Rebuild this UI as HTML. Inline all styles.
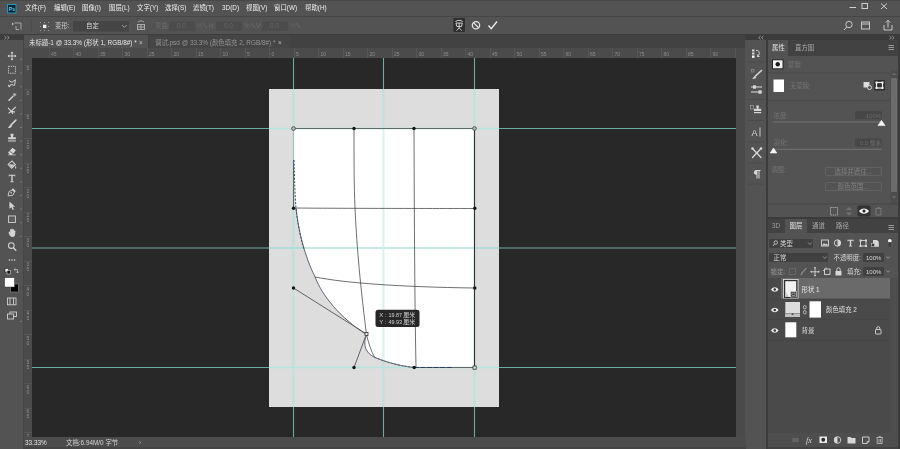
<!DOCTYPE html>
<html lang="zh-CN">
<head>
<meta charset="utf-8">
<title>Photoshop</title>
<style>
*{box-sizing:border-box;margin:0;padding:0}
html,body{width:900px;height:449px;overflow:hidden;background:#535353}
body{position:relative;font-family:"Liberation Sans","Noto Sans CJK SC",sans-serif;font-size:6.4px;color:#d6d6d6;line-height:1}
.abs{position:absolute}
.t{position:absolute;white-space:nowrap;line-height:10px;height:10px}
#menubar{left:0;top:0;width:900px;height:16px;background:#535353;border-top:1px solid #484848}
#optbar{left:0;top:16px;width:900px;height:18px;background:#535353;border-top:1px solid #464646}
#tabbar{left:24px;top:34px;width:722px;height:14px;background:#424242;border-top:1px solid #3d3d3d}
#tab1{left:0;top:0px;width:124px;height:13px;background:#535353}
#tab2{left:125px;top:0px;width:141px;height:13px;background:#454545}
#toolbar{left:0;top:34px;width:24px;height:415px;background:#535353;border-right:1px solid #464646}
#canvas{left:32px;top:58px;width:704px;height:379px;background:#282828;overflow:hidden}
#vscroll{left:736px;top:48px;width:8.5px;height:389px;background:#4a4a4a}
#rulerh{left:24px;top:48px;width:722px;height:10px;background:#4b4b4b}
#rulerv{left:24px;top:57px;width:8px;height:380px;background:#4b4b4b}
#status{left:24px;top:437px;width:722px;height:12px;background:#4c4c4c;border-bottom:2px solid #444}

#rulerh i{position:absolute;top:0;width:1px;height:10px;background:#565656}
#rulerh b{position:absolute;top:3px;margin-left:1px;font-weight:normal;font-size:5px;line-height:6px;color:#8e8e8e}
#rulerv i{position:absolute;left:0;height:1px;width:8px;background:#565656}
#rulerv b{position:absolute;left:2px;font-weight:normal;font-size:5px;line-height:5px;color:#8e8e8e;text-align:center;width:4px}

#menubar .t{top:2.300px;font-size:6.4px;color:#ededed}
#optbar .t{font-size:6.4px}
.dim{color:#7a7a7a}
#rightdock{left:744.5px;top:34px;width:155.5px;height:415px;background:#3b3b3b}
#iconcol{left:0px;top:6px;width:21px;height:409px;background:#535353}
#props{left:23.5px;top:6px;width:129.5px;height:177px;background:#535353}
#layers{left:23.5px;top:185px;width:129.5px;height:230px;background:#535353}
.ptabs{left:0;top:0;width:129.5px;height:16px;background:#424242}
.ptab{position:absolute;top:0;height:16px;background:#535353}
.box{position:absolute;background:#454545;border-radius:1px}
.btn{position:absolute;border:1px solid #626262;border-radius:1px;color:#808080;font-size:6.4px;text-align:center;line-height:7px}
#menubar .t,#optbar,#toolbar,#tabbar,#rulerh,#rulerv,#status,#rightdock,#rdov{filter:grayscale(1)}
</style>
</head>
<body>
<div id="menubar" class="abs"><svg class="abs" style="left:7px;top:3px" width="10" height="10" viewBox="0 0 10 10"><rect x="0.5" y="0.5" width="8.5" height="8.5" fill="#0b2836" stroke="#2b9dc4" stroke-width="0.9"/><text x="1.7" y="7" font-family="'Liberation Sans',sans-serif" font-size="5.2" font-weight="bold" fill="#62c6ea">Ps</text></svg><span class="t" style="left:25px">文件(F)</span><span class="t" style="left:54px">编辑(E)</span><span class="t" style="left:82px">图像(I)</span><span class="t" style="left:109px">图层(L)</span><span class="t" style="left:137px">文字(Y)</span><span class="t" style="left:165px">选择(S)</span><span class="t" style="left:193px">滤镜(T)</span><span class="t" style="left:222px">3D(D)</span><span class="t" style="left:246px">视图(V)</span><span class="t" style="left:274px">窗口(W)</span><span class="t" style="left:305px">帮助(H)</span><svg class="abs" style="left:840px;top:0" width="60" height="15" viewBox="0 0 60 15"><g stroke="#d0d0d0" stroke-width="1" fill="none"><line x1="9.5" y1="6.500" x2="16" y2="6.500"/><rect x="22" y="2.500" width="5.500" height="5"/><path d="M41,2.500 L47,8 M47,2.500 L41,8"/></g></svg></div>
<div id="optbar" class="abs"><svg class="abs" style="left:0;top:-2px" width="900" height="19" viewBox="0 15 900 19"><g stroke="#a8a8a8" stroke-width="1" fill="none"><path d="M14.5,23 L21,23 L21,29.5 M16,26 L16,29.5 L19,29.5"/><path d="M12,22.5 l2,1.5 l-2,1.5z" fill="#bdbdbd" stroke="none"/></g><line x1="31.5" y1="19" x2="31.5" y2="32" stroke="#4c4c4c"/><g fill="#9a9a9a"><rect x="40" y="22" width="1" height="1"/><rect x="44" y="22" width="1" height="1"/><rect x="48" y="22" width="1" height="1"/><rect x="40" y="26" width="1" height="1"/><rect x="48" y="26" width="1" height="1"/><rect x="40" y="30" width="1" height="1"/><rect x="44" y="30" width="1" height="1"/><rect x="48" y="30" width="1" height="1"/></g><rect x="43" y="24.7" width="3.4" height="3.4" fill="#f0f0f0"/><rect x="73" y="21" width="56" height="10.5" rx="1" fill="#454545"/><path d="M122,25 l2.3,2.5 l2.3,-2.5" stroke="#9a9a9a" stroke-width="1" fill="none"/><g stroke="#b5b5b5" stroke-width="0.9" fill="none"><rect x="137.5" y="24.5" width="7" height="5"/><line x1="141" y1="24.5" x2="141" y2="29.5"/><line x1="137.5" y1="27" x2="144.5" y2="27"/><path d="M138,22 C140,20.5 142,20.5 144,22"/></g><g fill="#4c4c4c"><rect x="169" y="21.5" width="26" height="9.5" rx="1"/><rect x="216" y="21.5" width="26" height="9.5" rx="1"/><rect x="262" y="21.5" width="26" height="9.5" rx="1"/></g><g stroke="#6a6a6a" stroke-width="0.9" fill="none"><path d="M203,23 l4,5 M251,23 l4,5 M296,23 l4,5"/></g><rect x="453.300" y="18" width="11.700" height="14" rx="0.800" fill="#2f2f2f"/><g stroke="#e0e0e0" stroke-width="0.9" fill="none"><path d="M455.500,21.500 C457.500,20 460.800,20 462.800,21.500"/><path d="M456,23 L462.300,23 L461.500,26.500 L456.800,26.500z M459.150,23 L459.150,26.500"/><path d="M459.150,26.500 l0,1.500 M456.500,30.500 l2.650,-2.500 l2.650,2.500"/></g><circle cx="476" cy="25.200" r="3.700" stroke="#e6e6e6" stroke-width="1.250" fill="none"/><line x1="473.400" y1="22.600" x2="478.600" y2="27.800" stroke="#e6e6e6" stroke-width="1.250"/><path d="M488.500,25.500 L491.200,28.600 L497,21.500" stroke="#ececec" stroke-width="1.400" fill="none"/><g stroke="#c8c8c8" stroke-width="1" fill="none"><circle cx="849" cy="24.500" r="3.200"/><line x1="846.700" y1="27" x2="844" y2="30"/><rect x="861.500" y="22" width="8" height="7"/><line x1="861.500" y1="24" x2="869.500" y2="24"/><path d="M884,25 L884,30 L892,30 L892,25 M888,27.500 L888,20.500 M885.800,22.500 L888,20.300 L890.200,22.500"/></g></svg><span class="t" style="left:55px;top:4.300px;color:#d0d0d0">变形:</span><span class="t" style="left:86px;top:4.300px;color:#d8d8d8">自定</span><span class="t dim" style="left:155px;top:4.300px;color:#6e6e6e">弯曲:</span><span class="t dim" style="left:177px;top:4.300px;color:#666">0.0</span><span class="t" style="left:197px;top:4.300px;color:#666">%</span><span class="t dim" style="left:209px;top:4.300px;color:#6e6e6e">H:</span><span class="t" style="left:224px;top:4.300px;color:#666">0.0</span><span class="t" style="left:244px;top:4.300px;color:#666">%</span><span class="t dim" style="left:256px;top:4.300px;color:#6e6e6e">V:</span><span class="t" style="left:270px;top:4.300px;color:#666">0.0</span><span class="t" style="left:290px;top:4.300px;color:#666">%</span></div>
<div id="toolbar" class="abs"><svg class="abs" style="left:0;top:0" width="24" height="415" viewBox="0 34 24 415">
<rect x="0" y="34" width="24" height="6" fill="#3d3d3d"/>
<path d="M4.500,36 l1.800,1.700 l-1.800,1.700 M7.300,36 l1.800,1.700 l-1.800,1.700" stroke="#a8a8a8" stroke-width="0.800" fill="none"/>
<rect x="5" y="268.500" width="3.500" height="3.500" fill="#f4f4f4" stroke="#222" stroke-width="0.600"/><rect x="7" y="270.500" width="3.500" height="3.500" fill="#111" stroke="#ddd" stroke-width="0.600"/>
<path d="M14,269.500 h3.500 v3.500 M14,269.500 l1.300,-1.200 M14,269.500 l1.300,1.200 M17.500,273 l-1.200,-1.300 M17.500,273 l1.200,-1.300" stroke="#c8c8c8" stroke-width="0.700" fill="none"/>
<rect x="10.500" y="284" width="8" height="8" fill="#000" stroke="#777" stroke-width="0.800"/>
<rect x="4.700" y="277.700" width="9.800" height="9.300" fill="#fff" stroke="#3a3a3a" stroke-width="0.500"/>
<g stroke="#cfcfcf" stroke-width="0.900" fill="none"><rect x="7.500" y="298" width="8.500" height="6.800"/><path d="M10,298 v6.800 M13.500,298 v6.800"/>
<rect x="10" y="312" width="6.500" height="4.500"/><rect x="7.500" y="314" width="6" height="5" fill="#535353"/></g>
<g fill="#9a9a9a"><path d="M20,60 l1.500,0 l0,-1.500z M20,73.600 l1.500,0 l0,-1.500z M20,87.200 l1.500,0 l0,-1.500z M20,100.800 l1.500,0 l0,-1.500z M20,114.400 l1.500,0 l0,-1.500z M20,128 l1.500,0 l0,-1.500z M20,141.600 l1.500,0 l0,-1.500z M20,155.200 l1.500,0 l0,-1.500z M20,168.800 l1.500,0 l0,-1.500z M20,182.400 l1.500,0 l0,-1.500z M20,196 l1.500,0 l0,-1.500z M20,209.600 l1.500,0 l0,-1.500z M20,223.200 l1.500,0 l0,-1.500z M20,236.800 l1.500,0 l0,-1.500z M20,322 l1.500,0 l0,-1.500z"/></g>
<g transform="translate(12,56.0) scale(0.86)"><path d="M0,-4.5 L0,4.5 M-4.5,0 L4.5,0" stroke="#d4d4d4" stroke-width="1.1"/><path d="M0,-5.2 l-1.800,2 h3.600z M0,5.200 l-1.800,-2 h3.600z M-5.200,0 l2,-1.800 v3.600z M5.200,0 l-2,-1.800 v3.600z" fill="#d4d4d4"/></g><g transform="translate(12,69.6) scale(0.86)"><rect x="-4" y="-3.800" width="8" height="8" fill="none" stroke="#d4d4d4" stroke-width="1" stroke-dasharray="1.600 1"/></g><g transform="translate(12,83.2) scale(0.86)"><path d="M-3.500,-3 L0,-1 L4,-4 L3,2.500 L-1.500,1.500 L-3,4.500 M-3,4.500 L-4,2 Z" fill="none" stroke="#d4d4d4" stroke-width="1.100" stroke-linejoin="round"/></g><g transform="translate(12,96.8) scale(0.86)"><path d="M-4,4.500 L1.500,-1" stroke="#d4d4d4" stroke-width="1.600"/><path d="M3,-4.500 L3,-0.500 M1,-2.500 L5,-2.500 M1.600,-3.900 L4.400,-1.100 M4.400,-3.900 L1.600,-1.100" stroke="#d4d4d4" stroke-width="0.700"/></g><g transform="translate(12,110.4) scale(0.86)"><path d="M-4.500,-3 L-1,1 L4.500,-4 M-4,3.500 L-1,1 L1,4 M-1,1 L3.500,2" stroke="#d4d4d4" stroke-width="1.300" fill="none"/></g><g transform="translate(12,124.0) scale(0.86)"><path d="M4.500,-4.500 L-1,1" stroke="#d4d4d4" stroke-width="1.800" stroke-linecap="round"/><path d="M-1.500,1 C-3,1.500 -3,3.500 -5,4.500 C-3,5 -0.500,4 0,2.200Z" fill="#d4d4d4"/></g><g transform="translate(12,137.6) scale(0.86)"><path d="M-1.700,-4.500 h3.400 v1.500 l-0.700,2.500 h3.500 v2.500 h-9 v-2.500 h3.500 l-0.700,-2.500z" fill="#d4d4d4"/><rect x="-4.500" y="3.300" width="9" height="1.200" fill="#d4d4d4"/></g><g transform="translate(12,151.2) scale(0.86)"><path d="M-4.500,1.500 L0.500,-4 L4.500,-1 L0,4.500 L-2.500,4.500 Z" fill="#d4d4d4"/><path d="M-4.500,4.300 L4.500,4.300" stroke="#d4d4d4" stroke-width="0.800"/><path d="M-2.800,0 L1.500,3" stroke="#535353" stroke-width="0.800"/></g><g transform="translate(12,164.8) scale(0.86)"><path d="M-4.500,-0.500 L0,-4.500 L4,0 L-0.500,4 Z" fill="none" stroke="#d4d4d4" stroke-width="1.200"/><path d="M-3.500,-0.500 L3,0 L-0.500,3z" fill="#d4d4d4"/><path d="M4.300,1.500 C5.300,3 5.300,4.500 4.300,4.500 C3.300,4.500 3.300,3 4.300,1.500z" fill="#d4d4d4"/></g><g transform="translate(12,178.4) scale(0.86)"><path d="M-3.800,-4.300 H3.800 V-2.300 H3 V-3.100 H0.800 V3.600 H2 V4.400 H-2 V3.600 H-0.800 V-3.100 H-3 V-2.300 H-3.800Z" fill="#d4d4d4"/></g><g transform="translate(12,192.0) scale(0.86)"><path d="M-4.500,4.500 L-3.500,-0.500 L0.500,-2.500 L2.800,0 L1,3.800 Z" fill="none" stroke="#d4d4d4" stroke-width="1"/><path d="M1,-4.500 L4.500,-1 L3,0.300 L-0.300,-3 Z" fill="#d4d4d4"/><circle cx="-1" cy="1" r="0.900" fill="#d4d4d4"/></g><g transform="translate(12,205.6) scale(0.86)"><path d="M-3,-4.800 L-3,3.800 L-0.800,1.800 L0.800,5 L2.200,4.300 L0.700,1.200 L3.600,1.200 Z" fill="#d4d4d4"/></g><g transform="translate(12,219.2) scale(0.86)"><rect x="-4" y="-3.800" width="8" height="7.600" fill="#5e5e5e" stroke="#d4d4d4" stroke-width="1"/></g><g transform="translate(12,232.8) scale(0.86)"><path d="M-3.800,0.500 C-4.200,-1.500 -2.600,-2 -2.200,-0.500 L-2.200,-3.500 C-2.200,-4.600 -0.900,-4.600 -0.900,-3.500 L-0.700,-4.200 C-0.500,-5.200 0.800,-5 0.800,-4 L1,-3.600 C1.300,-4.500 2.500,-4.300 2.500,-3.300 L2.600,-2.300 C3,-3 4.100,-2.800 4,-1.800 L3.600,2 C3.400,4 2.500,4.800 0.500,4.800 C-1.500,4.800 -2.800,3.500 -3.800,0.500Z" fill="#d4d4d4"/></g><g transform="translate(12,246.4) scale(0.86)"><circle cx="-0.800" cy="-1" r="3.300" fill="none" stroke="#d4d4d4" stroke-width="1.200"/><path d="M1.600,1.500 L4.500,4.500" stroke="#d4d4d4" stroke-width="1.500" stroke-linecap="round"/></g><g transform="translate(12,260.0) scale(0.86)"><circle cx="-3" cy="0" r="0.950" fill="#d4d4d4"/><circle cx="0" cy="0" r="0.950" fill="#d4d4d4"/><circle cx="3" cy="0" r="0.950" fill="#d4d4d4"/></g></svg></div>
<div id="tabbar" class="abs"><div id="tab1" class="abs"><span class="t" style="left:5px;top:2.800px;font-size:6.4px;color:#e4e4e4">未标题-1 @ 33.3% (形状 1, RGB/8#) *</span><span class="t" style="left:115px;top:2.800px;font-size:6.4px;color:#c8c8c8">×</span></div><div id="tab2" class="abs"><span class="t" style="left:6px;top:2.800px;font-size:6.4px;color:#959595">调试.psd @ 33.3% (颜色填充 2, RGB/8#) *</span><span class="t" style="left:129px;top:2.800px;font-size:6.4px;color:#bdbdbd">×</span></div></div>
<div id="rulerh" class="abs"><i style="left:24.5px"></i><b style="left:26.0px">45</b><i style="left:49.0px"></i><b style="left:50.5px">40</b><i style="left:73.5px"></i><b style="left:75.0px">35</b><i style="left:98.0px"></i><b style="left:99.5px">30</b><i style="left:122.5px"></i><b style="left:124.0px">25</b><i style="left:147.0px"></i><b style="left:148.5px">20</b><i style="left:171.5px"></i><b style="left:173.0px">15</b><i style="left:196.0px"></i><b style="left:197.5px">10</b><i style="left:220.5px"></i><b style="left:222.0px">5</b><i style="left:245.0px"></i><b style="left:246.5px">0</b><i style="left:269.5px"></i><b style="left:271.0px">5</b><i style="left:294.0px"></i><b style="left:295.5px">10</b><i style="left:318.5px"></i><b style="left:320.0px">15</b><i style="left:343.0px"></i><b style="left:344.5px">20</b><i style="left:367.5px"></i><b style="left:369.0px">25</b><i style="left:392.0px"></i><b style="left:393.5px">30</b><i style="left:416.5px"></i><b style="left:418.0px">35</b><i style="left:441.0px"></i><b style="left:442.5px">40</b><i style="left:465.5px"></i><b style="left:467.0px">45</b><i style="left:490.0px"></i><b style="left:491.5px">50</b><i style="left:514.5px"></i><b style="left:516.0px">55</b><i style="left:539.0px"></i><b style="left:540.5px">60</b><i style="left:563.5px"></i><b style="left:565.0px">65</b><i style="left:588.0px"></i><b style="left:589.5px">70</b><i style="left:612.5px"></i><b style="left:614.0px">75</b><i style="left:637.0px"></i><b style="left:638.5px">80</b><i style="left:661.5px"></i><b style="left:663.0px">85</b><i style="left:686.0px"></i><b style="left:687.5px">90</b><i style="left:710.5px"></i><b style="left:712.0px">95</b></div>
<div id="rulerv" class="abs"><i style="top:7.5px"></i><b style="top:9.0px">5</b><i style="top:32.0px"></i><b style="top:33.5px">0</b><i style="top:56.5px"></i><b style="top:58.0px">5</b><i style="top:81.0px"></i><b style="top:82.5px">1<br>0</b><i style="top:105.5px"></i><b style="top:107.0px">1<br>5</b><i style="top:130.0px"></i><b style="top:131.5px">2<br>0</b><i style="top:154.5px"></i><b style="top:156.0px">2<br>5</b><i style="top:179.0px"></i><b style="top:180.5px">3<br>0</b><i style="top:203.5px"></i><b style="top:205.0px">3<br>5</b><i style="top:228.0px"></i><b style="top:229.5px">4<br>0</b><i style="top:252.5px"></i><b style="top:254.0px">4<br>5</b><i style="top:277.0px"></i><b style="top:278.5px">5<br>0</b><i style="top:301.5px"></i><b style="top:303.0px">5<br>5</b><i style="top:326.0px"></i><b style="top:327.5px">6<br>0</b><i style="top:350.5px"></i><b style="top:352.0px">6<br>5</b><i style="top:375.0px"></i><b style="top:376.5px">7<br>0</b></div>
<div id="canvas" class="abs">
<svg class="abs" style="left:-32px;top:-58px" width="900" height="449" viewBox="0 0 900 449">
<rect x="269" y="89" width="230" height="318" fill="#dddddd"/>
<path id="shape" d="M294,129 L474.5,129 L474.5,367.5 L414,367.5 C396,365.5 382,360.5 374.7,357.3 C365.5,353 362.5,345 366.5,334.5 C340,318 322,295 315.5,278 C304,255 298,228 296,208 C295,195 294.500,180 294,160 Z" fill="#ffffff"/>
<!-- guides -->
<g stroke="#68ab9f" stroke-width="1.1">
<line x1="293.5" y1="57" x2="293.5" y2="437"/>
<line x1="383.5" y1="57" x2="383.5" y2="437"/>
<line x1="474.5" y1="57" x2="474.5" y2="437"/>
<line x1="32" y1="128.5" x2="746" y2="128.5"/>
<line x1="32" y1="248" x2="746" y2="248"/>
<line x1="32" y1="367.5" x2="746" y2="367.5"/>
</g>
<g stroke="#b3e6dc" stroke-width="1.3">
<line x1="293.5" y1="89" x2="293.5" y2="407"/>
<line x1="383.5" y1="89" x2="383.5" y2="407"/>
<line x1="474.5" y1="89" x2="474.5" y2="407"/>
<line x1="269" y1="128.5" x2="499" y2="128.5"/>
<line x1="269" y1="248" x2="499" y2="248"/>
<line x1="269" y1="367.5" x2="499" y2="367.5"/>
</g>
<g stroke="#d2f5f0" stroke-width="1.1">
<line x1="383.5" y1="129.5" x2="383.5" y2="360"/>
<line x1="304" y1="248" x2="474" y2="248"/>
</g>
<!-- mesh -->
<g stroke="#4a4a4a" stroke-width="0.8" fill="none">
<path d="M293.5,128.5 L474.5,128.5"/>
<path d="M474.5,128.5 L474.5,367.5" stroke="#333" stroke-width="1.1"/>
<path d="M354,128.5 C354,160 354,185 355,208 C356.5,240 359,275 366.5,334.5 C368.5,343 371,351 374.7,357.3"/>
<path d="M414,128.5 C414.3,200 414.5,290 416,367.5"/>
<path d="M293.5,208 C320,208.3 400,208.5 474.5,208.5"/>
<path d="M315,277 C345,283 400,287 474.5,288"/>
<path d="M293.5,160 L293.5,208 M296,208 C298,228 304,255 315.5,278 C322,295 340,318 366.5,334.5 C362.5,345 365.5,353 374.7,357.3 C382,360.5 396,365.5 414,367.5 L474.5,367.5"/>
</g>
<path d="M293.5,128.5 L293.5,160" stroke="#a9b5b3" stroke-width="0.8"/>
<!-- handles -->
<g stroke="#444" stroke-width="0.8" fill="none">
<line x1="293.5" y1="288" x2="366.5" y2="334"/>
<line x1="366.5" y1="334" x2="354" y2="367.5"/>
</g>
<g fill="none" stroke-dasharray="2 1.5">
<path d="M294,160 C294.5,180 295,195 296,208 C297.500,222 300,236 304,250" stroke="#33507f" stroke-width="1"/>
<path d="M304,250 C307,260 311,269 315.5,278 C322,295 340,318 366.5,334.5 C362.5,345 365.5,353 374.7,357.3" stroke="#6f86ad" stroke-width="0.7" opacity="0.7"/>
<path d="M374.7,357.3 C382,360.5 396,365.5 414,367.5" stroke="#4a5f85" stroke-width="0.9"/>
<path d="M414,367.5 L452,367.5" stroke="#2c3f63" stroke-width="1.1" stroke-dasharray="5 1.5"/>
</g>
<g fill="#151515">
<circle cx="354" cy="128.5" r="1.7"/><circle cx="414" cy="128.5" r="1.7"/>
<circle cx="293.5" cy="208.3" r="1.7"/><circle cx="474.8" cy="208.3" r="1.7"/>
<circle cx="293.5" cy="288" r="1.7"/><circle cx="474.8" cy="288" r="1.7"/>
<circle cx="354" cy="367.5" r="1.7"/><circle cx="414.2" cy="367.5" r="1.7"/>
</g>
<g fill="#e8e8e8" stroke="#333" stroke-width="0.8">
<circle cx="293.5" cy="128.5" r="1.9" fill="#b5b5b5" stroke="#444"/><circle cx="474.5" cy="128.5" r="1.900" fill="#b5b5b5" stroke="#444"/>
<rect x="473" y="366" width="3.2" height="3.2"/>
<rect x="365" y="332.5" width="3" height="3"/>
</g>
</svg>
<svg class="abs" style="left:343px;top:250px;filter:grayscale(1)" width="50" height="20" viewBox="375 308 50 20">
<rect x="375.5" y="309.8" width="44" height="17.2" rx="2.5" fill="#272727"/>
<g font-family="'Liberation Sans','Noto Sans CJK SC',sans-serif" font-size="6" fill="#d4d4d4">
<text x="379.3" y="317">X :</text><text x="388.4" y="317" font-size="5.400">19.87</text><text x="403.300" y="317">厘米</text>
<text x="379.3" y="324">Y :</text><text x="388.4" y="324" font-size="5.400">49.93</text><text x="403.300" y="324">厘米</text>
</g>
</svg>
</div>
<div id="vscroll" class="abs"></div><div id="rightdock" class="abs"><div id="iconcol" class="abs"></div><div id="props" class="abs"><div class="ptabs abs"><div class="ptab" style="left:0;width:20px"></div></div></div><div id="layers" class="abs"><div class="ptabs abs" style="height:14px"><div class="ptab" style="left:17px;width:22px;height:14px"></div></div><div class="abs" style="left:0;top:59px;width:129.500px;height:171px;background:#4e4e4e"></div><div class="abs" style="left:0;top:228px;width:129.500px;height:2px;background:#424242"></div><div class="abs" style="left:0;top:59px;width:122px;height:155px;background:#4a4a4a"></div><div class="abs" style="left:13px;top:59px;width:109px;height:21px;background:#6a6a6a"></div></div></div><div id="rdov" class="abs" style="left:0;top:0;width:900px;height:449px;pointer-events:none"><svg class="abs" style="left:0;top:0" width="900" height="449" viewBox="0 0 900 449"><g stroke="#a8a8a8" stroke-width="0.800" fill="none"><path d="M760.500,36 l-1.800,1.700 l1.800,1.700 M763.300,36 l-1.800,1.700 l1.800,1.700"/><path d="M889.500,36 l1.800,1.700 l-1.800,1.700 M892.300,36 l1.800,1.700 l-1.800,1.700"/></g><line x1="748" y1="62" x2="764" y2="62" stroke="#4a4a4a" stroke-width="1"/><line x1="748" y1="99.5" x2="764" y2="99.5" stroke="#4a4a4a" stroke-width="1"/><line x1="748" y1="120.5" x2="764" y2="120.5" stroke="#4a4a4a" stroke-width="1"/><line x1="748" y1="142" x2="764" y2="142" stroke="#4a4a4a" stroke-width="1"/><line x1="748" y1="163" x2="764" y2="163" stroke="#4a4a4a" stroke-width="1"/><line x1="748" y1="184" x2="764" y2="184" stroke="#4a4a4a" stroke-width="1"/><g fill="#d6d6d6"><rect x="752" y="49.500" width="2.500" height="2"/><rect x="752" y="52.500" width="2.500" height="2"/><rect x="752" y="55.500" width="2.500" height="2.300" fill="#fff"/></g><path d="M756,50.500 C759.500,50 760.500,54 757.500,56.500 M757.500,56.500 l0.200,-2 M757.500,56.500 l2,0" stroke="#d6d6d6" stroke-width="1" fill="none"/><path d="M761.500,70.500 L755.500,76" stroke="#d6d6d6" stroke-width="1.600" stroke-linecap="round"/><path d="M755,76 C753.500,76.500 753.800,78 752,78.800 C754,79.300 756,78.500 756.300,77Z" fill="#d6d6d6"/><rect x="751.500" y="69.500" width="2.500" height="2.500" fill="none" stroke="#999" stroke-width="0.600"/><g stroke="#d6d6d6" stroke-width="1.100"><line x1="751" y1="87" x2="762" y2="87"/><line x1="751" y1="92" x2="762" y2="92"/></g><rect x="753" y="85.300" width="3" height="3.400" fill="#d6d6d6"/><rect x="758.500" y="90.300" width="3" height="3.400" fill="#d6d6d6"/><path d="M756.300,105.500 h2.600 v1.200 l-0.500,2 h2.800 v2.200 h-7.200 v-2.200 h2.800 l-0.500,-2z" fill="#d6d6d6"/><rect x="754" y="112" width="7.200" height="1.200" fill="#d6d6d6"/><rect x="750.500" y="105.500" width="3" height="3.500" fill="none" stroke="#aaa" stroke-width="0.600"/><text x="751.500" y="135.500" font-family="'Liberation Sans',sans-serif" font-size="9" fill="#d6d6d6">A</text><line x1="760" y1="127.500" x2="760" y2="136.500" stroke="#d6d6d6" stroke-width="0.900"/><g stroke="#d6d6d6" stroke-width="1.300" stroke-linecap="round"><line x1="752.500" y1="148.500" x2="761" y2="157.500"/><line x1="761" y1="148.500" x2="752.500" y2="157.500"/></g><circle cx="752.500" cy="148.500" r="1.300" fill="#d6d6d6"/><circle cx="761" cy="148.500" r="1.300" fill="#d6d6d6"/><path d="M756.500,170 h4 v1 h-1 v7.500 h-1 v-7.500 h-1 v7.500 h-1 v-3.800 C753,174.800 753,170 756.500,170z" fill="#d6d6d6"/></svg><svg class="abs" style="left:0;top:0" width="900" height="449" viewBox="0 0 900 449"><g stroke="#b0b0b0" stroke-width="0.800"><path d="M888.500,45.500 h5.500 M888.500,47.500 h5.500 M888.500,49.500 h5.500"/><path d="M888.500,225.500 h5.500 M888.500,227.500 h5.500 M888.500,229.500 h5.500"/></g><rect x="772.500" y="59.800" width="10.500" height="9" fill="#f2f2f2" stroke="#262626" stroke-width="1"/><circle cx="777.750" cy="64.300" r="2.200" fill="#1c1c1c"/><line x1="768" y1="73" x2="890" y2="73" stroke="#484848"/><rect x="773.500" y="79.500" width="10.500" height="12.500" fill="#ffffff"/><g stroke="#d6d6d6" stroke-width="1" fill="none"><rect x="864" y="82.500" width="5" height="4.500" fill="#e0e0e0"/><circle cx="869.500" cy="87.500" r="2" fill="#535353"/></g><rect x="874" y="80" width="11" height="10.500" rx="1" fill="#2e2e2e"/><rect x="876.500" y="82.500" width="6" height="5.500" fill="none" stroke="#f0f0f0" stroke-width="1.200"/><g fill="#f0f0f0"><rect x="875.500" y="81.500" width="2" height="2"/><rect x="881.500" y="81.500" width="2" height="2"/><rect x="875.500" y="87" width="2" height="2"/><rect x="881.500" y="87" width="2" height="2"/></g><line x1="768" y1="100.500" x2="890" y2="100.500" stroke="#494949"/><rect x="855" y="111.300" width="27" height="8" rx="1" fill="#474747"/><line x1="773" y1="122" x2="882" y2="122" stroke="#686868" stroke-width="1.300"/><path d="M881.500,120.300 l3.600,5.300 h-7.200z" fill="#f4f4f4" stroke="#f4f4f4" stroke-width="0.600" stroke-linejoin="round"/><rect x="855" y="138.500" width="27" height="8" rx="1" fill="#474747"/><line x1="773" y1="149.300" x2="882" y2="149.300" stroke="#6c6c6c" stroke-width="1.300"/><path d="M773.500,148 l3.300,5 h-6.600z" fill="#f4f4f4" stroke="#f4f4f4" stroke-width="0.600" stroke-linejoin="round"/><rect x="890.500" y="70" width="7" height="134" fill="#4d4d4d"/><rect x="891" y="78" width="6" height="114" rx="1" fill="#6b6b6b"/><path d="M892.500,75 l1.500,-1.800 l1.500,1.800 M892.500,196 l1.500,1.800 l1.500,-1.800" stroke="#8a8a8a" stroke-width="0.700" fill="none"/><line x1="768" y1="204" x2="898" y2="204" stroke="#474747"/><rect x="830.500" y="207.500" width="7" height="7.500" fill="none" stroke="#b8b8b8" stroke-width="0.900" stroke-dasharray="1.200 0.800"/><path d="M849,207 l3.500,3 h-7z M849,215.500 l3.500,-3 h-7z" fill="#707070"/><rect x="857.500" y="205.500" width="13" height="11" rx="1.500" fill="#333"/><path d="M859,211 C861,207.500 867,207.500 869,211 C867,214.500 861,214.500 859,211z" fill="#f2f2f2"/><circle cx="864" cy="211" r="1.500" fill="#222"/><path d="M875.500,208.500 h6 M876,208.500 v6.500 h5 v-6.500 M877.500,207.500 h2" stroke="#7a7a7a" stroke-width="0.900" fill="none"/><rect x="769" y="239" width="44" height="9" rx="1" fill="#404040"/><circle cx="775.800" cy="242.500" r="1.700" fill="none" stroke="#d6d6d6" stroke-width="0.800"/><line x1="774.500" y1="244" x2="773" y2="246" stroke="#d6d6d6" stroke-width="0.800"/><path d="M808,242.500 l1.800,2 l1.800,-2" stroke="#a0a0a0" stroke-width="0.800" fill="none"/><rect x="821.500" y="240" width="7" height="6" fill="none" stroke="#d6d6d6" stroke-width="0.900"/><path d="M822,245.500 l2,-2.500 l1.500,1.500 l1.200,-1 l1.500,2z" fill="#d6d6d6"/><circle cx="837.500" cy="243" r="3.200" fill="none" stroke="#d6d6d6" stroke-width="0.900"/><path d="M837.500,239.800 a3.200,3.200 0 0 1 0,6.400z" fill="#d6d6d6"/><path d="M847.500,239.800 h6 v1.600 h-0.700 v-0.700 h-1.600 v5 h0.900 v0.800 h-3.200 v-0.800 h0.900 v-5 h-1.600 v0.700 h-0.700z" fill="#d6d6d6"/><rect x="860.500" y="240.500" width="5.500" height="5.500" fill="none" stroke="#d6d6d6" stroke-width="0.900"/><g fill="#d6d6d6"><rect x="859.500" y="239.500" width="2" height="2"/><rect x="865" y="239.500" width="2" height="2"/><rect x="859.500" y="245" width="2" height="2"/><rect x="865" y="245" width="2" height="2"/></g><path d="M873,240 h4 l1.800,1.800 v5 h-5.800z" fill="#d6d6d6"/><rect x="871.500" y="243.500" width="3" height="3" fill="#333" stroke="#d6d6d6" stroke-width="0.500"/><circle cx="889.800" cy="240.800" r="1.900" fill="#efefef"/><rect x="888.500" y="242" width="2.600" height="5" rx="1.300" fill="#3e3e3e"/><rect x="769" y="253" width="59" height="9" rx="1" fill="#404040"/><path d="M823,256.500 l1.800,2 l1.800,-2" stroke="#a0a0a0" stroke-width="0.800" fill="none"/><rect x="863" y="253" width="21" height="9" rx="1" fill="#404040"/><path d="M886.500,256.500 l1.600,1.800 l1.600,-1.800" stroke="#a0a0a0" stroke-width="0.800" fill="none"/><rect x="863" y="267" width="21" height="9" rx="1" fill="#404040"/><path d="M886.500,270.500 l1.600,1.800 l1.600,-1.800" stroke="#a0a0a0" stroke-width="0.800" fill="none"/><rect x="789.500" y="268.500" width="6" height="6" fill="none" stroke="#8a8a8a" stroke-width="0.700" stroke-dasharray="1 1"/><path d="M806,268.500 L801.500,273.500" stroke="#8a8a8a" stroke-width="1.200" stroke-linecap="round"/><path d="M801.500,273.500 l-1.500,2 l2.300,-0.800z" fill="#8a8a8a"/><path d="M815,267.500 v8.500 M810.800,271.800 h8.400" stroke="#d6d6d6" stroke-width="0.900"/><path d="M815,266.800 l-1.300,1.500 h2.600z M815,276.600 l-1.300,-1.500 h2.600z M810.200,271.800 l1.500,-1.300 v2.600z M819.800,271.800 l-1.500,-1.300 v2.600z" fill="#d6d6d6"/><rect x="824.500" y="269" width="5.500" height="5.500" fill="none" stroke="#d6d6d6" stroke-width="0.900"/><path d="M823,270.500 h2 M826,267.500 v2 " stroke="#d6d6d6" stroke-width="0.800"/><rect x="835.500" y="271" width="6" height="4.500" fill="#d6d6d6"/><path d="M836.800,271 v-1.500 a1.700,1.700 0 0 1 3.400,0 v1.500" stroke="#d6d6d6" stroke-width="0.900" fill="none"/><path d="M771,289.5 C773,286.5 776.500,286.5 778.500,289.5 C776.500,292.5 773,292.5 771,289.5z" fill="#ededed"/><circle cx="774.750" cy="289.5" r="1.250" fill="#333"/><path d="M771,310 C773,307 776.500,307 778.500,310 C776.500,313 773,313 771,310z" fill="#ededed"/><circle cx="774.750" cy="310" r="1.250" fill="#333"/><path d="M771,330.5 C773,327.5 776.500,327.5 778.500,330.5 C776.500,333.5 773,333.5 771,330.5z" fill="#ededed"/><circle cx="774.750" cy="330.5" r="1.250" fill="#333"/><rect x="783.500" y="279.500" width="14.500" height="19" fill="#2e2e2e" stroke="#e8e8e8" stroke-width="0.800"/><rect x="785.200" y="281.200" width="11" height="15.800" fill="#f1f1f1"/><path d="M785.200,288 c0.500,4 2,7.500 4,9 h-4z" fill="#c4c4c4"/><rect x="790.500" y="291.500" width="6" height="5.500" fill="#3a3a3a" stroke="#ddd" stroke-width="0.600"/><rect x="792" y="293" width="3" height="2.500" fill="none" stroke="#ddd" stroke-width="0.500"/><rect x="785.300" y="302" width="14.700" height="15" fill="#dcdcdc"/><rect x="785.300" y="313.300" width="14.700" height="1" fill="#777"/><rect x="785.300" y="314.300" width="14.700" height="2.700" fill="#c0c0c0"/><path d="M792.500,313 l1.300,1.800 h-2.600z" fill="#333"/><path d="M804.800,305.500 a1.300,1.600 0 0 1 0,3.500 M804.800,305.500 a1.300,1.600 0 0 0 0,3.500 M804.800,310.500 a1.300,1.600 0 0 1 0,3.500 M804.800,310.500 a1.300,1.600 0 0 0 0,3.500" stroke="#cfcfcf" stroke-width="0.800" fill="none"/><rect x="809.500" y="301.300" width="11.500" height="16.300" fill="#ffffff"/><rect x="785.300" y="322.300" width="11" height="15" fill="#ffffff"/><rect x="875.500" y="329.500" width="5.500" height="4.500" rx="0.500" fill="none" stroke="#d6d6d6" stroke-width="0.900"/><path d="M876.700,329.500 v-1.300 a1.550,1.550 0 0 1 3.100,0 v1.300" stroke="#d6d6d6" stroke-width="0.900" fill="none"/><g stroke="#454545" stroke-width="0.800"><line x1="768" y1="299" x2="890" y2="299"/><line x1="768" y1="319.500" x2="890" y2="319.500"/><line x1="768" y1="340.500" x2="890" y2="340.500"/></g><path d="M792.500,440 h6 M793,438.500 h2 v3 h-2z M796,438.500 h2 v3 h-2z" stroke="#6e6e6e" stroke-width="0.800" fill="none"/><text x="806" y="442.500" font-family="'Liberation Serif',serif" font-style="italic" font-size="8" fill="#d6d6d6">fx</text><rect x="819.500" y="436.500" width="7.500" height="6.500" fill="#e8e8e8"/><circle cx="823.250" cy="439.750" r="1.900" fill="#2a2a2a"/><circle cx="837.500" cy="440" r="3.300" fill="none" stroke="#d6d6d6" stroke-width="0.900"/><path d="M837.500,436.700 a3.300,3.300 0 0 0 0,6.600z" fill="#d6d6d6"/><path d="M847.500,437 h3 l1,1 h4 v5.500 h-8z" fill="#d6d6d6"/><path d="M862.500,437 h6.500 v4.500 l-2,2 h-4.500z" fill="none" stroke="#d6d6d6" stroke-width="0.900"/><path d="M869,441.500 h-2 v2" stroke="#d6d6d6" stroke-width="0.800" fill="none"/><path d="M876.500,437.500 h6.500 M877.200,437.500 v6 h5 v-6 M878.600,436.500 h2.300 M879,439 v3.500 M880.600,439 v3.500" stroke="#bdbdbd" stroke-width="0.850" fill="none"/></svg><span class="t" style="left:772px;top:43px;font-size:6.4px;color:#e6e6e6;">属性</span><span class="t" style="left:795px;top:43px;font-size:6.4px;color:#a8a8a8;">直方图</span><span class="t" style="left:788px;top:59.5px;font-size:6.4px;color:#747474;">蒙版</span><span class="t" style="left:790px;top:80.5px;font-size:6.4px;color:#747474;">无蒙版</span><span class="t" style="left:773.5px;top:111px;font-size:6.4px;color:#747474;">浓度:</span><span class="t" style="left:866px;top:110.5px;font-size:5.8px;color:#6c6c6c;">100%</span><span class="t" style="left:773.5px;top:137.5px;font-size:6.4px;color:#747474;">羽化:</span><span class="t" style="left:860px;top:137.5px;font-size:5.8px;color:#6c6c6c;">0.0 像素</span><span class="t" style="left:771.5px;top:165px;font-size:6.4px;color:#747474;">调整:</span><div class="btn" style="left:824.500px;top:166.500px;width:57.500px;height:9px;font-size:6.4px;line-height:7px">选择并遮住...</div><div class="btn" style="left:824.500px;top:182px;width:57.500px;height:9px;font-size:6.4px;line-height:7px">颜色范围...</div><span class="t" style="left:772px;top:221px;font-size:6.4px;color:#9c9c9c;">3D</span><span class="t" style="left:789.5px;top:221px;font-size:6.4px;color:#e6e6e6;">图层</span><span class="t" style="left:812px;top:221px;font-size:6.4px;color:#a8a8a8;">通道</span><span class="t" style="left:836px;top:221px;font-size:6.4px;color:#a8a8a8;">路径</span><span class="t" style="left:780px;top:238.5px;font-size:6.4px;color:#d6d6d6;">类型</span><span class="t" style="left:773.5px;top:252.5px;font-size:6.4px;color:#d6d6d6;">正常</span><span class="t" style="left:833.5px;top:252.5px;font-size:6.4px;color:#d6d6d6;">不透明度:</span><span class="t" style="left:866px;top:252.5px;font-size:6px;color:#d6d6d6;">100%</span><span class="t" style="left:770.5px;top:266.5px;font-size:6.4px;color:#9a9a9a;">锁定:</span><span class="t" style="left:847px;top:266.5px;font-size:6.4px;color:#d6d6d6;">填充:</span><span class="t" style="left:866px;top:266.5px;font-size:6px;color:#d6d6d6;">100%</span><span class="t" style="left:801.5px;top:285px;font-size:6.4px;color:#e8e8e8;">形状 1</span><span class="t" style="left:826px;top:305px;font-size:6.4px;color:#e0e0e0;">颜色填充 2</span><span class="t" style="left:801.5px;top:325.5px;font-size:6.4px;color:#e0e0e0;">背景</span></div><div id="status" class="abs"><span class="t" style="left:1px;top:0.700px;font-size:6.4px;color:#e2e2e2">33.33%</span><span class="t" style="left:42px;top:0.700px;font-size:6.4px;color:#d4d4d4">文档:6.94M/0 字节</span><span class="t" style="left:115px;top:0.700px;font-size:6.4px;color:#b0b0b0">›</span></div>
</body>
</html>
